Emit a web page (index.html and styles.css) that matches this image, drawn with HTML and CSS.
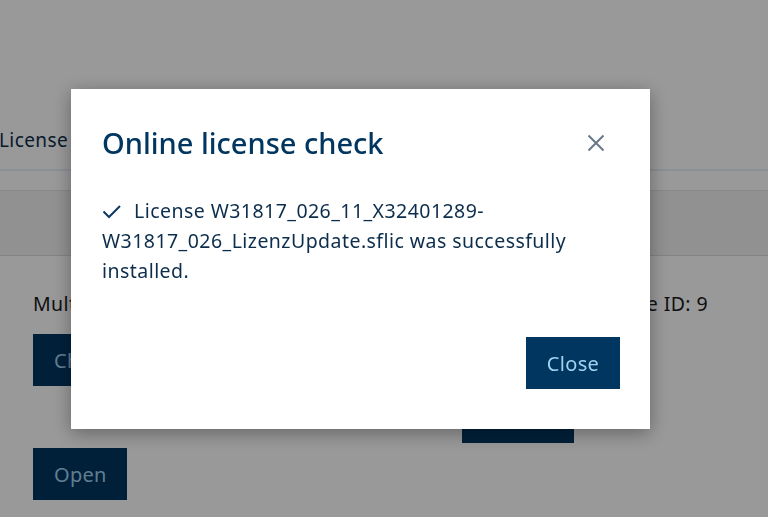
FILE: index.html
```html
<!DOCTYPE html>
<html>
<head>
<meta charset="utf-8">
<link rel="stylesheet" href="styles.css">
</head>
<body>
<div class="page">
  <div class="tabs"><span class="tab">License</span></div>
  <div class="spacer"></div>
  <div class="band"></div>
  <div class="content">
    <div class="col left">
      <p class="label">Multi-user license</p>
      <button class="btn btn-check">Check online</button>
      <button class="btn btn-open">Open</button>
    </div>
    <div class="col right">
      <p class="label">Device ID: 9</p>
      <button class="btn btn-right">Deactivate</button>
    </div>
  </div>
</div>

<div class="overlay">
  <div class="modal" role="dialog">
    <div class="modal-head">
      <h2 class="modal-title">Online license check</h2>
      <button class="modal-x" aria-label="Close">
        <svg width="18" height="18" viewBox="0 0 18 18"><path d="M1.5 1.5 L16.5 16.5 M16.5 1.5 L1.5 16.5" stroke="#687887" stroke-width="2" fill="none"/></svg>
      </button>
    </div>
    <p class="modal-body"><svg class="check" width="20" height="14" viewBox="0 0 20 14"><path d="M1.5 6.5 L7 12 L18 1" stroke="#0c3a63" stroke-width="2" fill="none"/></svg>License W31817_026_11_X32401289-W31817_026_LizenzUpdate.sflic was successfully installed.</p>
    <div class="modal-foot">
      <button class="btn btn-close">Close</button>
    </div>
  </div>
</div>
</body>
</html>
```
FILE: styles.css
```css
html, body {
  margin: 0;
  padding: 0;
  background: #ffffff;
  font-family: "Noto Sans", "Open Sans", sans-serif;
  color: #0f2a44;
}
.page {
  width: 768px;
  height: 517px;
  overflow: hidden;
  padding-top: 116px;
  box-sizing: border-box;
}
.tabs {
  height: 53px;
  border-bottom: 2px solid #e6f0fc;
  display: flex;
  align-items: center;
}
.tab {
  font-size: 19px;
  letter-spacing: 0.4px;
  color: #0e2e4d;
  margin-left: -1px;
  margin-bottom: 6px;
}
.spacer {
  height: 19px;
  border-bottom: 1px solid #e3e3e3;
}
.band {
  height: 64px;
  background: #f2f2f2;
  border-bottom: 1px solid #dcdcdc;
}
.content {
  display: flex;
  padding-left: 33px;
  padding-top: 36px;
}
.col {
  display: flex;
  flex-direction: column;
}
.left { width: 429px; align-items: flex-start; }
.right { width: 246px; align-items: stretch; }
.label {
  margin: 0;
  font-size: 19.5px;
  letter-spacing: 0.4px;
  line-height: 24px;
  color: #1a1a1a;
  white-space: nowrap;
}
.right .label { text-align: right; }
.btn {
  border: none;
  background: #003660;
  color: #a2d2f0;
  font-family: "Noto Sans", "Open Sans", sans-serif;
  font-size: 20px;
  letter-spacing: 0.3px;
  height: 52px;
  padding: 0 21px;
}
.btn-check { margin-top: 18px; }
.btn-open { margin-top: 62px; width: 94px; }
.btn-right { margin-top: 75px; width: 112px; align-self: flex-start; }

.overlay {
  position: fixed;
  inset: 0;
  background: rgba(0, 0, 0, 0.4);
}
.modal {
  margin: 89px 0 0 71px;
  width: 579px;
  height: 340px;
  box-sizing: border-box;
  background: #ffffff;
  box-shadow: 0 4px 18px rgba(0, 0, 0, 0.35);
  padding: 33px 30px 40px 31px;
  display: flex;
  flex-direction: column;
}
.modal-head {
  display: flex;
  align-items: center;
  justify-content: space-between;
}
.modal-title {
  margin: 0;
  font-size: 29px;
  font-weight: 500;
  line-height: 42px;
  color: #003660;
  letter-spacing: 0;
}
.modal-x {
  border: none;
  background: none;
  padding: 0;
  width: 18px;
  height: 18px;
  margin-right: 15px;
  display: flex;
}
.modal-body {
  margin: 32px 0 0 0;
  font-size: 19.5px;
  letter-spacing: 0.45px;
  line-height: 30px;
  color: #0c2d4c;
}
.check {
  margin-right: 12px;
  vertical-align: -1px;
}
.modal-foot {
  margin-top: auto;
  display: flex;
  justify-content: flex-end;
}
.btn-close { width: 94px; padding: 0; }
```
